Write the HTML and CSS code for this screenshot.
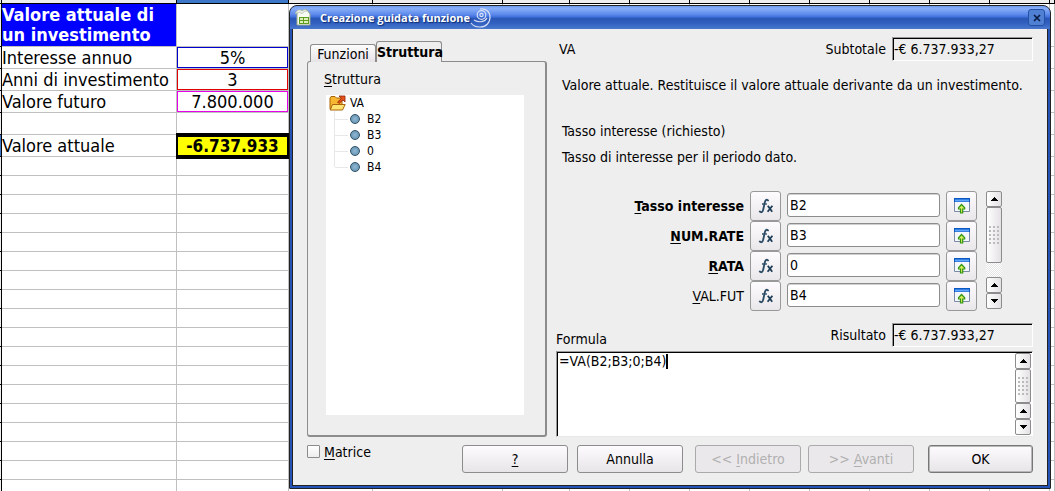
FILE: index.html
```html
<!DOCTYPE html>
<html lang="it">
<head>
<meta charset="utf-8">
<title>Creazione guidata funzione</title>
<link rel="stylesheet" href="styles.css">
</head>
<body>
<svg class="defs" aria-hidden="true">
  <symbol id="fx" viewBox="0 0 16 16">
    <path d="M10 2.4C8.4.9 7.3 2 6.8 4.4L5.2 11.600C4.700 14 3.400 14.900 1.800 13.600" fill="none" stroke="#2d4c66" stroke-width="1.900" stroke-linecap="round"/>
    <path d="M4 6h5" stroke="#2d4c66" stroke-width="1.300"/>
    <path d="M9.800 7.800l4.400 6M14.400 7.800L9.600 13.800" stroke="#1d3c56" stroke-width="1.800"/>
  </symbol>
  <symbol id="shrink" viewBox="0 0 16 16">
    <path d="M.5 1v12.500h15V1z" fill="#f4f7fb" stroke="#7b8ba5"/>
    <path d="M0 0h16v4H0z" fill="#0a58c4"/>
    <path d="M1 1.500h14v2H1z" fill="#62a6f8"/>
    <path d="M7.500 6.500L4.500 9.800v1.200h2v4h2.200v-4h2V9.800z" fill="#d8f060" stroke="#2f9410" stroke-width="1.200"/>
  </symbol>
  <symbol id="up" viewBox="0 0 7 4"><path d="M3 0h1v1h1v1h1v1h1v1H0V3h1V2h1V1h1z"/></symbol>
  <symbol id="down" viewBox="0 0 7 4"><path d="M0 0h7v1H6v1H5v1H4v1H3V3H2V2H1V1H0z"/></symbol>
</svg>

<table class="sheet">
  <colgroup><col class="c-head"><col class="c-a"><col class="c-b"><col class="c-c"><col class="c-d"><col class="c-e"><col class="c-n" span="8"><col></colgroup>
  <tbody id="grid">
    <tr class="top"><th></th><th></th><th class="current"></th></tr>
    <tr class="tall"><th></th><td class="heading">Valore attuale di un investimento</td><td></td></tr>
    <tr class="data"><th></th><td>Interesse annuo</td><td class="num ref-blue">5%</td></tr>
    <tr class="data"><th></th><td>Anni di investimento</td><td class="num ref-red">3</td></tr>
    <tr class="data"><th></th><td>Valore futuro</td><td class="num ref-pink">7.800.000</td></tr>
    <tr class="data"><th></th><td></td><td></td></tr>
    <tr class="data"><th class="current"></th><td>Valore attuale</td><td class="num result">-6.737.933</td></tr>
  </tbody>
</table>

<section class="dialog" role="dialog" aria-labelledby="title">
  <header class="titlebar">
    <svg class="app-icon" viewBox="0 0 16 17" aria-hidden="true">
      <path d="M2 2l10-1 3 4v11H2z" fill="#f8fbf4" stroke="#9aa88a"/>
      <path d="M0 5c2-5 5-5 7-3 2-2 4-2 5 0-2 0-4 1-5 3-2-2-4-2-7 0z" fill="#e9eee6" stroke="#a8b3a0" stroke-width=".6"/>
      <path d="M4 8h10v7H4z" fill="#5d9e1c"/>
      <path d="M5 9h3v2H5zm4 0h4v2H9zM5 12h3v2H5zm4 0h4v2H9z" fill="#e0f0bc"/>
    </svg>
    <h1 id="title">Creazione guidata funzione</h1>
    <svg class="swirl" viewBox="0 0 22 20" fill="none" stroke="#d6e0f6" stroke-width="1.200" aria-hidden="true">
      <path d="M10 1c6-1 10 3 10 8 0 6-4 10-10 10-4 0-7-1-9-4"/>
      <path d="M4 12c5 3 11 2 13-2"/>
      <circle cx="11.500" cy="7" r="4.300"/>
      <circle cx="11.500" cy="7" r="1.600"/>
    </svg>
    <button class="close" aria-label="Chiudi"><svg viewBox="0 0 8 8"><path d="M1 1l6 6M7 1L1 7" stroke="#0a1b45" stroke-width="1.700"/></svg></button>
  </header>

  <div class="content">
    <div class="main">
      <div class="left">
        <div class="tabs" role="tablist">
          <button class="tab" role="tab">Funzioni</button>
          <button class="tab active" role="tab" aria-selected="true">Struttura</button>
        </div>
        <div class="panel">
          <div id="tree-label"><u>S</u>truttura</div>
          <ul class="tree" aria-labelledby="tree-label">
            <li class="root">
              <svg viewBox="0 0 17 16" aria-hidden="true">
                <path d="M1 14V3l1-1.500h4L7.500 3H13v11z" fill="#f7b731" stroke="#a86408"/>
                <path d="M3.500 9.500h12.700L13.500 15H1.200z" fill="#ffe373" stroke="#a86408"/>
                <path d="M10 1h6v6l-2-2-4 3.500-1.500-1.500L12.500 3.500z" fill="#e8521c" stroke="#8e2408" stroke-width=".8"/>
              </svg>VA
            </li>
            <li class="leaf">B2</li>
            <li class="leaf">B3</li>
            <li class="leaf">0</li>
            <li class="leaf">B4</li>
          </ul>
        </div>
      </div>

      <div class="right">
        <div class="line">
          <span class="fn">VA</span>
          <label for="sub">Subtotale</label>
          <output class="field" id="sub">-€ 6.737.933,27</output>
        </div>
        <div class="text">
          <p class="desc">Valore attuale. Restituisce il valore attuale derivante da un investimento.</p>
          <p>Tasso interesse (richiesto)</p>
          <p>Tasso di interesse per il periodo dato.</p>
        </div>
        <div class="args">
          <div class="rows">
            <div class="arg"><label class="req" for="a1"><u>T</u>asso interesse</label><button class="icon" aria-label="Funzione"><svg><use href="#fx"/></svg></button><input id="a1" value="B2"><button class="icon" aria-label="Riduci"><svg><use href="#shrink"/></svg></button></div>
            <div class="arg"><label class="req" for="a2"><u>N</u>UM.RATE</label><button class="icon" aria-label="Funzione"><svg><use href="#fx"/></svg></button><input id="a2" value="B3"><button class="icon" aria-label="Riduci"><svg><use href="#shrink"/></svg></button></div>
            <div class="arg"><label class="req" for="a3"><u>R</u>ATA</label><button class="icon" aria-label="Funzione"><svg><use href="#fx"/></svg></button><input id="a3" value="0"><button class="icon" aria-label="Riduci"><svg><use href="#shrink"/></svg></button></div>
            <div class="arg"><label for="a4"><u>V</u>AL.FUT</label><button class="icon" aria-label="Funzione"><svg><use href="#fx"/></svg></button><input id="a4" value="B4"><button class="icon" aria-label="Riduci"><svg><use href="#shrink"/></svg></button></div>
          </div>
          <div class="scroll">
            <button aria-label="Su"><svg><use href="#up"/></svg></button>
            <div class="thumb"><i></i></div>
            <div class="track"></div>
            <button aria-label="Su"><svg><use href="#up"/></svg></button>
            <button aria-label="Giù"><svg><use href="#down"/></svg></button>
          </div>
        </div>
        <div class="line outcome">
          <label class="formula-label" for="formula">Formula</label>
          <label for="res">Risultato</label>
          <output class="field" id="res">-€ 6.737.933,27</output>
        </div>
        <div class="formula">
          <textarea id="formula" spellcheck="false">=VA(B2;B3;0;B4)</textarea>
          <span class="caret"></span>
          <div class="scroll full">
            <button aria-label="Su"><svg><use href="#up"/></svg></button>
            <div class="thumb"><i></i></div>
            <button aria-label="Su"><svg><use href="#up"/></svg></button>
            <button aria-label="Giù"><svg><use href="#down"/></svg></button>
          </div>
        </div>
      </div>
    </div>

    <footer class="footer">
      <label class="check"><input type="checkbox"><span><u>M</u>atrice</span></label>
      <div class="pair">
        <button class="btn"><u>?</u></button>
        <button class="btn">Annulla</button>
      </div>
      <div class="pair">
        <button class="btn" disabled>&lt;&lt; <u>I</u>ndietro</button>
        <button class="btn" disabled>&gt;&gt; <u>A</u>vanti</button>
      </div>
      <button class="btn default">OK</button>
    </footer>
  </div>
</section>
<script src="grid.js"></script>
</body>
</html>
```
FILE: styles.css
```css
* { box-sizing: border-box; }
body {
  margin: 0;
  height: 100vh;
  overflow: hidden;
  position: relative;
  background: #fff;
  color: #000;
  font: 14px/16px "DejaVu Sans Condensed", "DejaVu Sans", sans-serif;
}
button, input, textarea { font: inherit; color: inherit; margin: 0; }
button { padding: 0; }
u { text-underline-offset: 2px; }
.defs { display: none; }

/* spreadsheet */
.sheet {
  width: 100%;
  table-layout: fixed;
  border-collapse: separate;
  border-spacing: 0;
  font-size: 18px;
  line-height: 20px;
}
.c-head { width: 2px; }
.c-a { width: 175px; }
.c-b { width: 112px; }
.c-c { width: 84px; }
.c-d { width: 130px; }
.c-e { width: 67px; }
.c-n { width: 60px; }
.sheet td { height: 19px; padding: 0; border: solid #c0c0c0; border-width: 0 1px 1px 0; }
.sheet th { padding: 0; background: #eee; border: solid #000; border-width: 0 1px 1px 0; }
.sheet .top th { height: 4px; }
.sheet .current { background: #3d77c7; }
.sheet .tall td { height: 43px; }
.sheet .data td { height: 22px; }
.sheet .heading { background: #00f; color: #fff; font-weight: bold; }
.sheet .num { text-align: center; }
.ref-blue { box-shadow: inset 0 0 0 1px #00c; }
.ref-red { box-shadow: inset 0 0 0 1px #e00000; }
.ref-pink { box-shadow: inset 0 0 0 1px #e800e8; }
.sheet .result {
  position: relative;
  background: #ff0;
  border-color: #000;
  font-size: 17px;
  font-weight: bold;
  box-shadow: inset 1px 2px #000, inset -1px -1px #000, 0 -2px #000, -1px 2px #000, 0 2px #000, -1px -2px #000;
}

/* dialog window */
.dialog {
  position: absolute;
  top: 5px;
  left: 289px;
  right: 4px;
  padding: 0 2px 2px;
  background: #2453b5;
  border: 1px solid #222;
  border-radius: 8px 8px 1px 1px;
}
.titlebar {
  display: flex;
  align-items: center;
  height: 23px;
  margin: 0 -2px;
  padding: 0 5px;
  border-radius: 7px 7px 0 0;
  background: linear-gradient(#6f9df0, #88aef8 12%, #5d8aeb 36%, #3f6fdc 48%, #2a57b6 54%, #3260c0 75%, #4878cc);
}
.app-icon { width: 16px; height: 17px; margin-right: 9px; }
.titlebar h1 {
  margin: 0;
  color: #fff;
  font: bold 11px/16px "Open Sans", sans-serif;
  text-shadow: 1px 1px 1px #0d2a70;
}
.swirl { width: 22px; height: 20px; }
.close {
  display: flex;
  align-items: center;
  justify-content: center;
  width: 17px;
  height: 17px;
  margin-left: auto;
  border: 1px solid #2450a4;
  border-radius: 3px;
  background: #4f80d4;
}
.close svg { width: 8px; height: 8px; }
.content {
  padding: 8px 14px 12px;
  background: #eee;
  border: 1px solid #222;
  border-top: 0;
}
.main { display: grid; grid-template-columns: 240px minmax(0, 1fr); gap: 9px; }

/* tabs and tree */
.left { display: flex; flex-direction: column; padding-top: 4px; }
.tabs { display: flex; align-items: flex-end; padding-left: 3px; height: 21px; z-index: 1; }
.tab {
  width: 66px;
  height: 18px;
  border: 1px solid #8c8c8c;
  border-bottom: 0;
  border-radius: 3px 3px 0 0;
  background: linear-gradient(#fdfdfd, #e6e3e6);
}
.tab.active { height: 21px; background: #eee; font-weight: bold; }
.panel {
  flex: 1;
  display: flex;
  flex-direction: column;
  gap: 8px;
  margin-top: -1px;
  padding: 9px 21px 20px 16px;
  border: 1px solid #8c8c8c;
  border-bottom-width: 2px;
  border-right-width: 2px;
  border-radius: 3px;
}
.tree { flex: 1; margin: 0 0 0 2px; padding: 0; list-style: none; background: #fff; font-size: 12px; }
.root { display: flex; gap: 4px; padding-left: 3px; }
.root svg { width: 17px; height: 16px; }
.leaf {
  display: flex;
  align-items: center;
  margin-left: 8px;
  border-left: 1px solid #e8e8e8;
}
.leaf:last-child { border-image: linear-gradient(#e8e8e8 50%, transparent 50%) 1; }
.leaf::before {
  content: "";
  order: -2;
  width: 13px;
  height: 1px;
  background: #e8e8e8;
}
.leaf::after {
  content: "";
  order: -1;
  width: 8px;
  height: 8px;
  margin: 0 7px 0 2px;
  border: 1px solid #2f5066;
  border-radius: 50%;
  background: radial-gradient(#8fb8d2, #5d8cac);
}

/* argument side */
.right { display: flex; flex-direction: column; }
.line { display: flex; align-items: center; height: 24px; }
.fn { margin-right: auto; padding-left: 3px; }
.field {
  width: 141px;
  height: 24px;
  margin-left: 6px;
  padding: 2px 0 0 1px;
  line-height: 18px;
  border: 1px solid;
  border-color: #999 #fff #fff #999;
  box-shadow: inset 1px 1px #000;
}
.text { padding-left: 6px; }
.text p { margin: 0 0 10px; white-space: nowrap; }
.text .desc { margin: 16px 0 30px; }
.args { display: flex; gap: 9px; margin-top: 16px; padding-right: 31px; }
.rows { flex: 1; display: grid; }
.arg {
  display: grid;
  grid-template-columns: 188px 31px minmax(0, 1fr) 31px;
  column-gap: 6px;
  align-items: center;
  height: 30px;
}
.arg label { padding-bottom: 1px; text-align: right; }
.req { font-weight: bold; }
.icon {
  display: flex;
  align-items: center;
  justify-content: center;
  height: 30px;
  border: 1px solid #999;
  border-radius: 3px;
  background: linear-gradient(#fdfbfd, #eae7ea);
}
.icon svg { width: 16px; height: 16px; }
.arg input {
  width: 100%;
  height: 24px;
  margin-top: -2px;
  padding: 0 2px;
  background: #fff;
  border: 1px solid #8c8c8c;
  border-radius: 3px;
  box-shadow: inset 0 1px #d0d0d0;
}

/* scroll bars */
.scroll { display: flex; flex-direction: column; width: 16px; height: 118px; }
.scroll button, .thumb {
  display: flex;
  align-items: center;
  justify-content: center;
  flex: 0 0 16px;
  border: 1px solid #8c8c8c;
  border-radius: 2px;
  background: linear-gradient(90deg, #fff, #e4e1e4);
}
.scroll svg { width: 7px; height: 4px; }
.scroll .thumb { flex: 0 0 56px; }
.thumb i { width: 11px; height: 19px; background: radial-gradient(circle at 1px 1px, #bbb 1px, transparent 1px) 0 0 / 4px 4px; }
.track { flex: 1; background: repeating-conic-gradient(#fff 0 25%, #e4e4e4 0 50%) 0 0 / 2px 2px; }
.scroll.full { height: auto; }
.scroll.full .thumb { flex: 1; }

/* formula */
.outcome { margin-top: 12px; }
.formula-label { margin-right: auto; padding-top: 8px; }
.formula {
  position: relative;
  display: flex;
  height: 86px;
  margin-top: 4px;
  padding: 1px 1px 1px 2px;
  background: #fff;
  border: 1px solid;
  border-color: #999 #fff #e8e8e8 #999;
  box-shadow: inset 1px 1px #000;
}
.formula textarea { flex: 1; padding: 0; border: 0; outline: 0; resize: none; background: none; }
.caret { position: absolute; top: 2px; left: 109px; width: 2px; height: 15px; background: #000; }

/* footer */
.footer { display: flex; margin-top: 8px; }
.check { display: flex; gap: 4px; margin-right: auto; height: 14px; line-height: 14px; }
.check input {
  appearance: none;
  width: 13px;
  height: 13px;
  border: 1px solid #8c8c8c;
  border-radius: 1px;
  background: linear-gradient(#fff, #eee);
}
.pair { display: flex; gap: 9px; margin-right: 12px; }
.pair + .pair { gap: 7px; margin-right: 14px; }
.btn {
  width: 106px;
  height: 28px;
  border: 1px solid #8c8c8c;
  border-radius: 3px;
  background: linear-gradient(#fdfbfd, #e8e5e8);
}
.btn:disabled { color: #b0b0b0; border-color: #aaa; background: #ebe8eb; }
.default { width: 105px; box-shadow: inset 0 0 0 1px #b8b8b8; border-color: #777; }
```
FILE: grid.js
```js
// Completes every sheet row to the full column count and adds the empty rows.
const COLUMNS = 15;
const EMPTY_ROWS = 18;
const grid = document.getElementById('grid');
for (let i = 0; i < EMPTY_ROWS; i++) {
  grid.insertRow().append(document.createElement('th'));
}
for (const row of grid.rows) {
  const tag = row.classList.contains('top') ? 'th' : 'td';
  while (row.cells.length < COLUMNS) row.append(document.createElement(tag));
}
```
